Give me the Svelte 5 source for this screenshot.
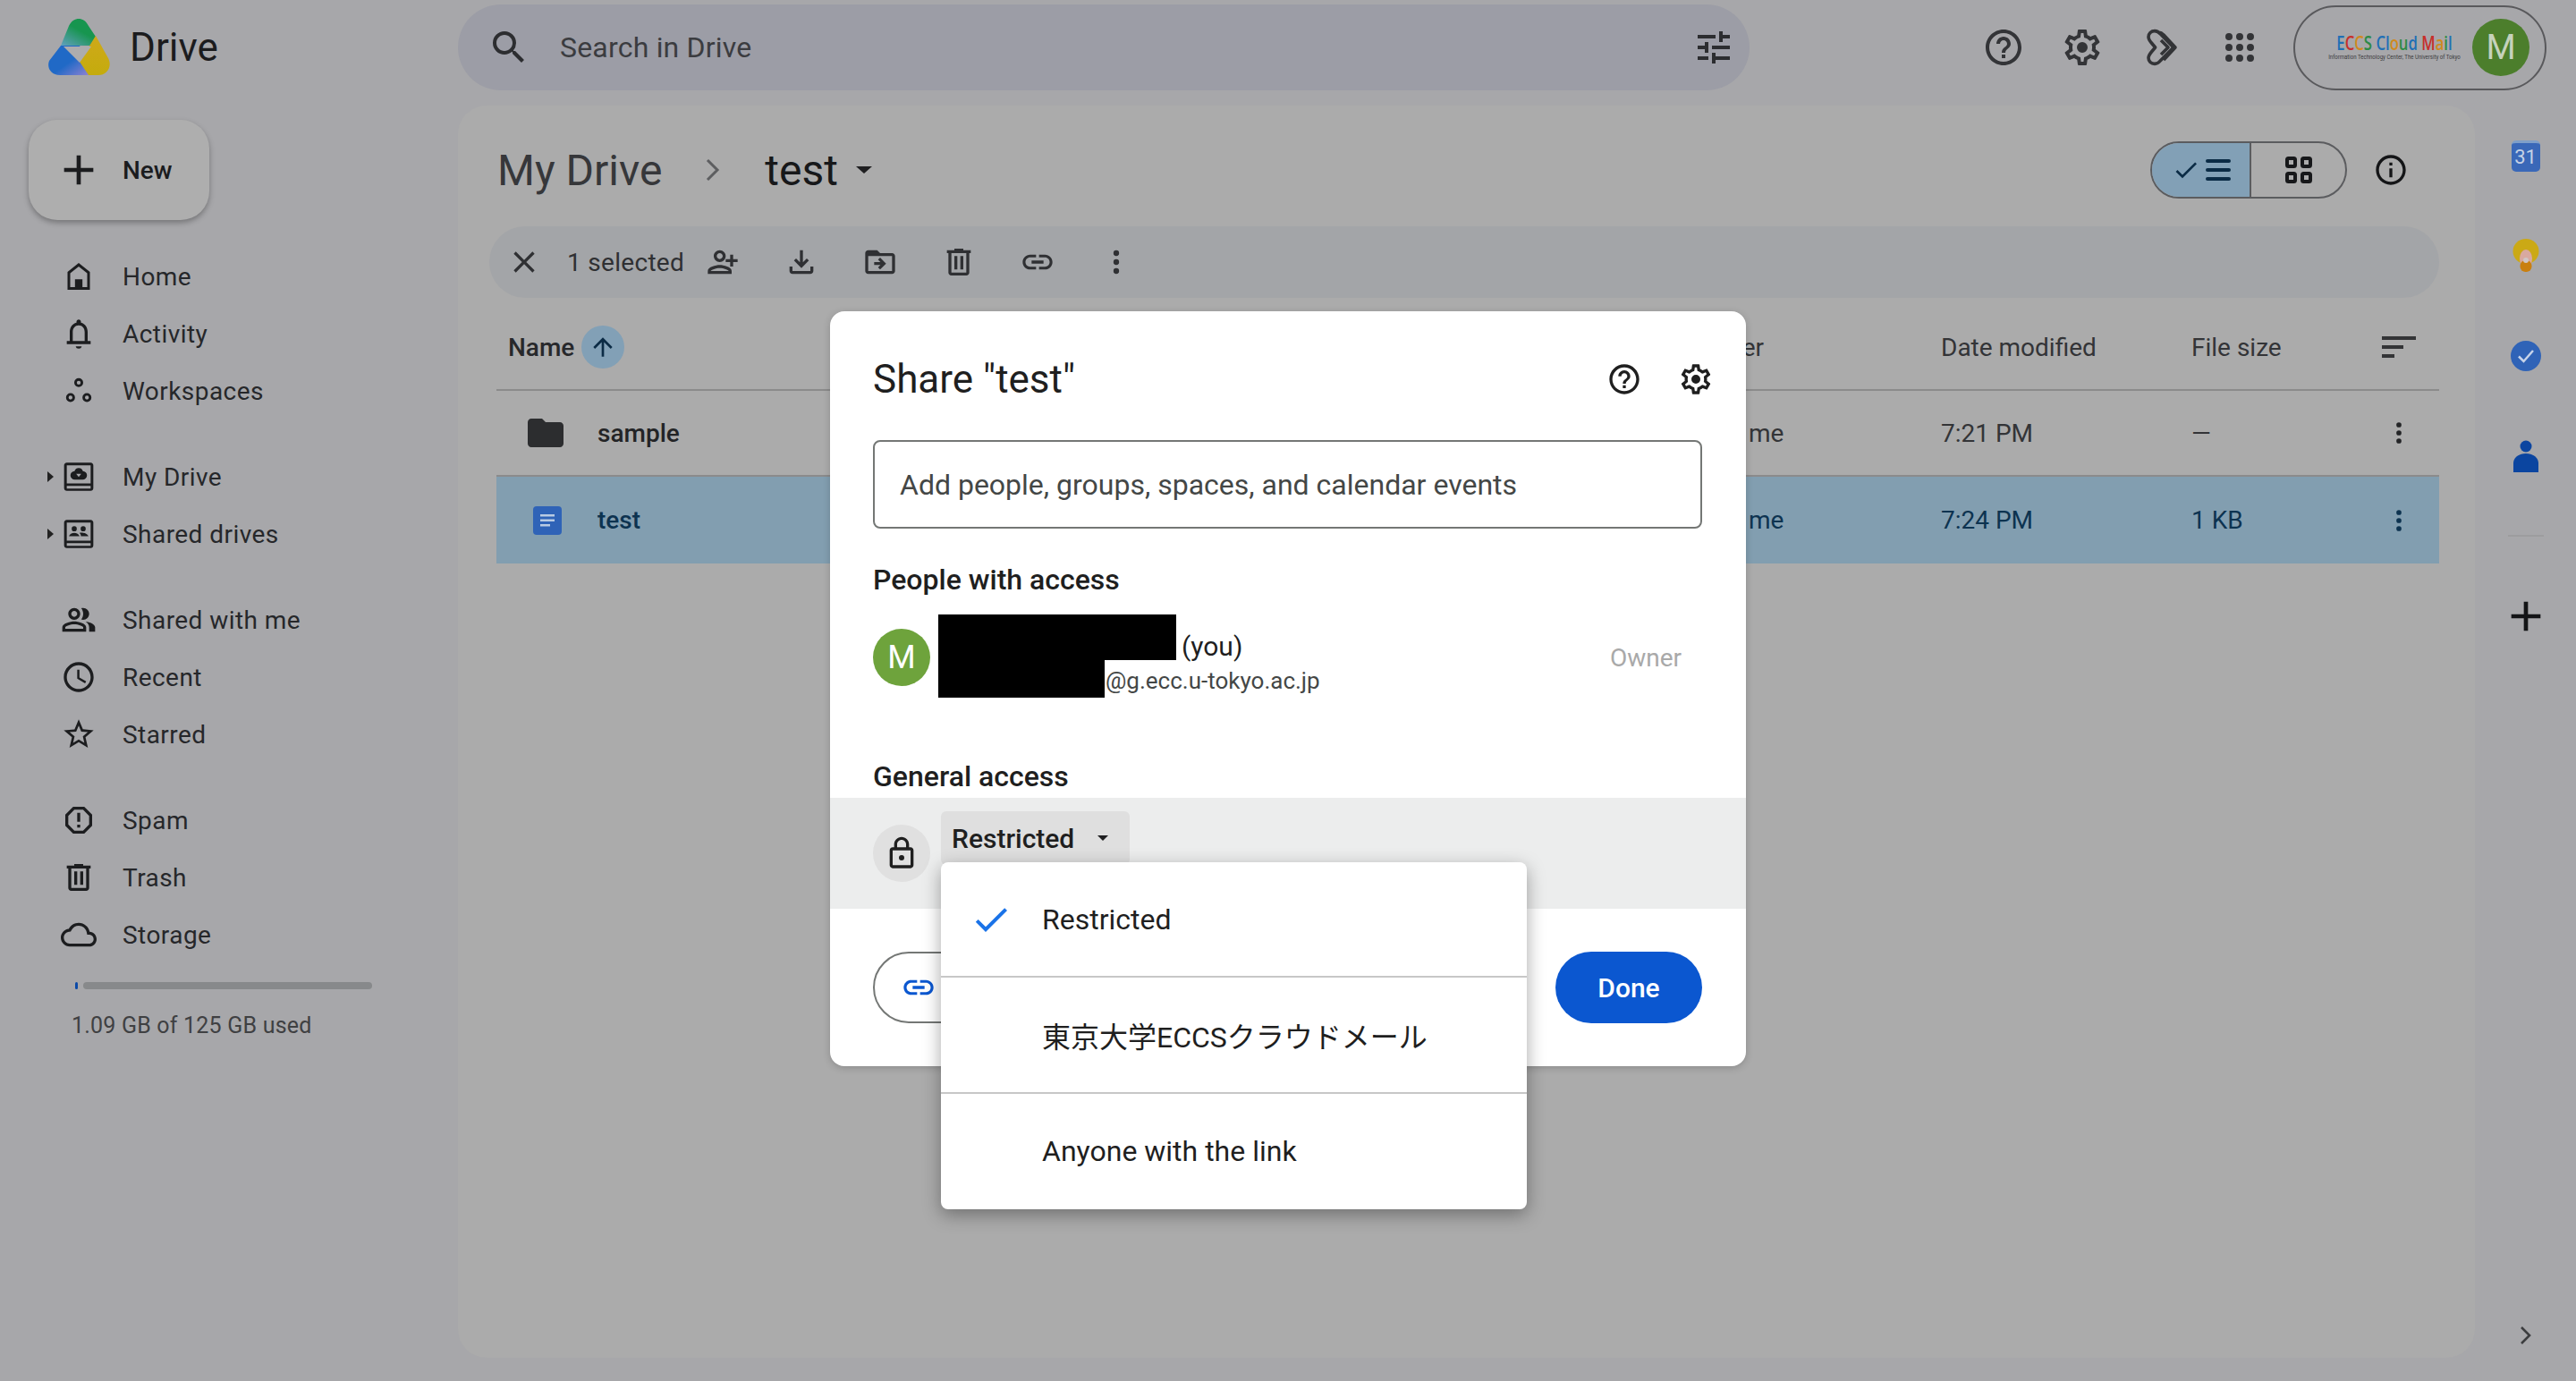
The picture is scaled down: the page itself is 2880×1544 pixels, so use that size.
<script>
  const circ = (x, y, r) => `M${x - r} ${y}a${r} ${r} 0 1 0 ${2 * r} 0a${r} ${r} 0 1 0 ${-2 * r} 0z`;
  const ring = (x, y, r, w) => circ(x, y, r) + circ(x, y, r - w);
  const P = {
    search: 'M15.5 14h-.79l-.28-.27A6.471 6.471 0 0 0 16 9.5 6.5 6.5 0 1 0 9.5 16c1.61 0 3.09-.59 4.23-1.57l.27.28v.79l5 4.99L20.49 19l-4.99-5zm-6 0C7.01 14 5 11.99 5 9.5S7.01 5 9.5 5 14 7.01 14 9.5 11.99 14 9.5 14z',
    tune: 'M3 17v2h6v-2H3zM3 5v2h10V5H3zm10 16v-2h8v-2h-8v-2h-2v6h2zM7 9v2H3v2h4v2h2V9H7zm14 4v-2H11v2h10zm-6-4h2V7h4V5h-4V3h-2v6z',
    help: 'M11 18h2v-2h-2v2zm1-16C6.48 2 2 6.48 2 12s4.48 10 10 10 10-4.48 10-10S17.52 2 12 2zm0 18c-4.41 0-8-3.59-8-8s3.59-8 8-8 8 3.59 8 8-3.59 8-8 8zm0-14c-2.21 0-4 1.79-4 4h2c0-1.1.9-2 2-2s2 .9 2 2c0 2-3 1.75-3 5h2c0-2.25 3-2.5 3-5 0-2.21-1.79-4-4-4z',
    gear: 'M19.43 12.98c.04-.32.07-.64.07-.98 0-.34-.03-.66-.07-.98l2.11-1.65c.19-.15.24-.42.12-.64l-2-3.46c-.09-.16-.26-.25-.44-.25-.06 0-.12.01-.17.03l-2.49 1c-.52-.4-1.08-.73-1.69-.98l-.38-2.65C14.46 2.18 14.25 2 14 2h-4c-.25 0-.46.18-.49.42l-.38 2.65c-.61.25-1.17.59-1.69.98l-2.49-1c-.06-.02-.12-.03-.18-.03-.17 0-.34.09-.43.25l-2 3.46c-.13.22-.07.49.12.64l2.11 1.65c-.04.32-.07.65-.07.98 0 .33.03.66.07.98l-2.11 1.65c-.19.15-.24.42-.12.64l2 3.46c.09.16.26.25.44.25.06 0 .12-.01.17-.03l2.49-1c.52.4 1.08.73 1.69.98l.38 2.65c.03.24.24.42.49.42h4c.25 0 .46-.18.49-.42l.38-2.65c.61-.25 1.17-.59 1.69-.98l2.49 1c.06.02.12.03.18.03.17 0 .34-.09.43-.25l2-3.46c.12-.22.07-.49-.12-.64l-2.11-1.65zm-1.98-1.71c.04.31.05.52.05.73 0 .21-.02.43-.05.73l-.14 1.13.89.7 1.08.84-.7 1.21-1.27-.51-1.04-.42-.9.68c-.43.32-.84.56-1.25.73l-1.06.43-.16 1.13-.2 1.35h-1.4l-.19-1.35-.16-1.13-1.06-.43c-.43-.18-.83-.41-1.23-.71l-.91-.7-1.06.43-1.27.51-.7-1.21 1.08-.84.89-.7-.14-1.13c-.03-.31-.05-.54-.05-.74s.02-.43.05-.73l.14-1.13-.89-.7-1.08-.84.7-1.21 1.27.51 1.04.42.9-.68c.43-.32.84-.56 1.25-.73l1.06-.43.16-1.13.2-1.35h1.39l.19 1.35.16 1.13 1.06.43c.43.18.83.41 1.23.71l.91.7 1.06-.43 1.27-.51.7 1.21-1.07.85-.89.7.14 1.13z' + circ(12, 12, 3),
    apps: [6, 12, 18].flatMap((y) => [6, 12, 18].map((x) => circ(x, y, 2))).join(''),
    plus: 'M19 13h-6v6h-2v-6H5v-2h6V5h2v6h6v2z',
    home: 'M12 3 4.5 9v12h15V9L12 3zm5.7 16.2H6.3V9.9L12 5.4l5.700 4.500v9.300zM9.500 14h5v5.200h-5z',
    bell: 'M12 22c1.1 0 1.800-.5 2-1.500h-4c.2 1 .9 1.500 2 1.500zm6-6.500V11c0-3.070-1.630-5.640-4.500-6.320V4c0-.83-.67-1.500-1.500-1.500s-1.500.67-1.500 1.500v.68C7.640 5.360 6 7.920 6 11v6H4v2h16v-2h-2v-1.500zM16 17H8v-6c0-2.480 1.510-4.500 4-4.500s4 2.020 4 4.500v6z',
    work: ring(12, 6.500, 3, 1.700) + ring(6.500, 16.500, 3, 1.700) + ring(17.500, 16.500, 3, 1.700),
    mydrive: 'M20 2.500H4c-1 0-1.800.8-1.800 1.800v15.400c0 1 .8 1.800 1.800 1.800h16c1 0 1.800-.8 1.800-1.800V4.300c0-1-.8-1.800-1.800-1.800zM20 20H4v-1.800h16V20zm0-3.500H4V4.300h16v12.200zM12 6.200a3 3 0 0 0-2.800 2A2.600 2.600 0 0 0 9.500 14h5a2.600 2.600 0 0 0 .3-5.800A3 3 0 0 0 12 6.200zM10.300 10h3.400L12 12.200z',
    shdrive: 'M20 2.500H4c-1 0-1.800.8-1.800 1.800v15.400c0 1 .8 1.800 1.800 1.800h16c1 0 1.800-.8 1.800-1.800V4.300c0-1-.8-1.800-1.800-1.800zM20 20H4v-1.800h16V20zm0-3.500H4V4.300h16v12.200z' + circ(9, 8.500, 1.700) + circ(15, 8.500, 1.700) + 'M5.500 13.500c.3-1.500 2-2.300 3.500-2.300s3.200.8 3.500 2.300zM13.500 13.500c0-1-.5-1.700-1-2.200.8-.2 1.700-.2 2.500-.1 1.600.1 3 1 3.500 2.300z',
    people: 'M16.670 13.130C18.040 14.060 19 15.320 19 17v3h4v-3c0-2.180-3.570-3.470-6.330-3.870zM15 12c2.210 0 4-1.790 4-4s-1.790-4-4-4c-.47 0-.91.1-1.330.24C14.500 5.270 15 6.580 15 8s-.5 2.730-1.330 3.760c.42.14.86.24 1.330.24zM9 12c2.210 0 4-1.790 4-4s-1.790-4-4-4-4 1.790-4 4 1.790 4 4 4zm0-6c1.100 0 2 .9 2 2s-.9 2-2 2-2-.9-2-2 .9-2 2-2zM9 13c-2.670 0-8 1.340-8 4v3h16v-3c0-2.660-5.330-4-8-4zm6 5H3v-.99C3.200 16.290 6.300 15 9 15s5.800 1.290 6 2v1z',
    clock: 'M11.990 2C6.470 2 2 6.480 2 12s4.470 10 9.990 10C17.520 22 22 17.520 22 12S17.520 2 11.990 2zM12 20c-4.420 0-8-3.580-8-8s3.580-8 8-8 8 3.580 8 8-3.580 8-8 8zm.5-13H11v6l5.250 3.150.75-1.230-4.500-2.670z',
    star: 'M22 9.240l-7.190-.62L12 2 9.190 8.630 2 9.240l5.460 4.730L5.820 21 12 17.270 18.180 21l-1.630-7.030L22 9.240zM12 15.400l-3.760 2.270 1-4.280-3.320-2.880 4.380-.38L12 6.100l1.710 4.040 4.380.38-3.320 2.880 1 4.280L12 15.400z',
    spam: 'M15.730 3H8.270L3 8.270v7.460L8.270 21h7.460L21 15.730V8.270L15.730 3zM19 14.900L14.900 19H9.100L5 14.900V9.100L9.100 5h5.800L19 9.100v5.800zM11 7h2v6h-2zM11 15h2v2h-2z',
    trash: 'M15 4V3H9v1H4v2h1v13c0 1.100.9 2 2 2h10c1.100 0 2-.9 2-2V6h1V4h-5zm2 15H7V6h10v13zM9 8h2v9H9zm4 0h2v9h-2z',
    cloud: 'M19.350 10.040C18.670 6.590 15.640 4 12 4 9.110 4 6.600 5.640 5.350 8.040 2.340 8.360 0 10.910 0 14c0 3.310 2.690 6 6 6h13c2.760 0 5-2.240 5-5 0-2.640-2.050-4.780-4.650-4.960zM19 18H6c-2.210 0-4-1.790-4-4 0-2.050 1.530-3.760 3.560-3.970l1.070-.11.5-.95C8.080 7.140 9.940 6 12 6c2.620 0 4.880 1.860 5.390 4.430l.3 1.500 1.530.11c1.560.1 2.780 1.410 2.780 2.960 0 1.650-1.350 3-3 3z',
    close: 'M19 6.410L17.590 5 12 10.590 6.410 5 5 6.410 10.590 12 5 17.590 6.410 19 12 13.410 17.590 19 19 17.590 13.410 12z',
    addp: 'M10 12c2.210 0 4-1.790 4-4s-1.790-4-4-4-4 1.790-4 4 1.790 4 4 4zm0-6c1.100 0 2 .9 2 2s-.9 2-2 2-2-.9-2-2 .9-2 2-2zm0 8c-2.670 0-8 1.340-8 4v2h16v-2c0-2.660-5.330-4-8-4zm-6 4c.22-.72 3.310-2 6-2 2.700 0 5.800 1.290 6 2H4zM19 10V7h-2v3h-3v2h3v3h2v-3h3v-2z',
    down: 'M18 15v3H6v-3H4v3c0 1.100.9 2 2 2h12c1.100 0 2-.9 2-2v-3h-2zm-1-4l-1.410-1.410L13 12.170V4h-2v8.170L8.410 9.590 7 11l5 5 5-5z',
    move: 'M20 6h-8l-2-2H4c-1.100 0-1.990.9-1.990 2L2 18c0 1.100.9 2 2 2h16c1.100 0 2-.9 2-2V8c0-1.100-.9-2-2-2zm0 12H4V8h16v10zm-8-1l4-4-4-4-1.400 1.400L12.200 12H8v2h4.200l-1.600 1.600z',
    link: 'M3.900 12c0-1.710 1.390-3.100 3.100-3.100h4V7H7c-2.760 0-5 2.240-5 5s2.240 5 5 5h4v-1.900H7c-1.710 0-3.100-1.390-3.100-3.100zM8 13h8v-2H8v2zm9-6h-4v1.900h4c1.710 0 3.100 1.390 3.100 3.100s-1.390 3.100-3.100 3.100h-4V17h4c2.760 0 5-2.240 5-5s-2.240-5-5-5z',
    more: circ(12, 6, 1.900) + circ(12, 12, 1.900) + circ(12, 18, 1.900),
    info: 'M11 7h2v2h-2zm0 4h2v6h-2zm1-9C6.480 2 2 6.480 2 12s4.480 10 10 10 10-4.480 10-10S17.520 2 12 2zm0 18c-4.410 0-8-3.590-8-8s3.590-8 8-8 8 3.590 8 8-3.590 8-8 8z',
    folder: 'M10 4H4c-1.100 0-1.990.9-1.990 2L2 18c0 1.100.9 2 2 2h16c1.100 0 2-.9 2-2V8c0-1.100-.9-2-2-2h-8l-2-2z',
    lock: 'M18 8h-1V6c0-2.760-2.240-5-5-5S7 3.240 7 6v2H6c-1.100 0-2 .9-2 2v10c0 1.100.9 2 2 2h12c1.100 0 2-.9 2-2V10c0-1.100-.9-2-2-2zM9 6c0-1.660 1.340-3 3-3s3 1.340 3 3v2H9V6zm9 14H6V10h12v10z' + circ(12, 15, 1.800),
    check: 'M9 16.170L4.830 12l-1.420 1.410L9 19 21 7l-1.410-1.410z',
    arrowup: 'M4 12l1.410 1.410L11 7.830V20h2V7.830l5.580 5.590L20 12l-8-8-8 8z'
  };
  const groups = [
    [['home', 'Home'], ['bell', 'Activity'], ['work', 'Workspaces']],
    [['mydrive', 'My Drive', true], ['shdrive', 'Shared drives', true]],
    [['people', 'Shared with me'], ['clock', 'Recent'], ['star', 'Starred']],
    [['spam', 'Spam'], ['trash', 'Trash'], ['cloud', 'Storage']]
  ];
  const tools = ['addp', 'down', 'move', 'trash', 'link', 'more'];
  const eccs = [['E', '#1f6fb5'], ['C', '#c62f2b'], ['C', '#d08a1d'], ['S', '#2d8a45'], [' ', '#000'], ['C', '#1f6fb5'], ['l', '#1f6fb5'], ['o', '#d08a1d'], ['u', '#2d8a45'], ['d', '#1f6fb5'], [' ', '#000'], ['M', '#c62f2b'], ['a', '#d08a1d'], ['i', '#2d8a45'], ['l', '#1f6fb5']];
</script>

{#snippet ic(name, size, cls = '')}
  <svg class="ic {cls}" width={size} height={size} viewBox="0 0 24 24" fill="currentColor" fill-rule="evenodd"><path d={P[name]} /></svg>
{/snippet}

<div class="app">
  <header class="top">
    <div class="brand">
      <svg width="70" height="66" viewBox="0 0 70 66">
        <defs>
          <linearGradient id="gg" x1="0.05" y1="1" x2="0.5" y2="0.4"><stop offset="0" stop-color="#5f9fbb" /><stop offset="1" stop-color="#17954f" /></linearGradient>
          <linearGradient id="bg" x1="0.5" y1="0.5" x2="0.95" y2="0.9"><stop offset="0" stop-color="#2069c6" /><stop offset="1" stop-color="#8d82d2" /></linearGradient>
          <linearGradient id="yg" x1="0" y1="0" x2="0" y2="1"><stop offset="0" stop-color="#cfa91a" /><stop offset="1" stop-color="#c4ab0d" /></linearGradient>
        </defs>
        <path d="M15 31 24 9C27 3 31 1 35 1s8 2 11 8l8 12-6 10z" fill="url(#gg)" />
        <path d="M15 31H36L45 49 53 64H14C4 64-1 56 2 48z" transform="translate(0 0)" fill="url(#bg)" />
        <path d="M54 20 68 45C73 55 66 64 57 64H46L36 49z" fill="url(#yg)" />
        <path d="M18 32H49L36 50z" fill="#acacae" />
      </svg>
      <span class="brand-name">Drive</span>
    </div>
    <div class="search">
      {@render ic('search', 48)}
      <span class="search-text">Search in Drive</span>
      {@render ic('tune', 48, 'tune')}
    </div>
    <div class="top-icons">
      {@render ic('help', 48)}
      {@render ic('gear', 48)}
      <svg class="ic" width="48" height="48" viewBox="0 0 24 24" fill="none" stroke="currentColor" stroke-width="1.800" stroke-linejoin="round"><path d="M8.500 2.800c-2 0-3.500 1.500-3.500 3.300 0 1.300.8 2.300 1.700 3.400L8.800 12 6.700 14.500C5.800 15.600 5 16.600 5 17.900c0 1.800 1.500 3.300 3.500 3.300 1.300 0 2.300-.7 3.100-1.700l7.400-7.500-7.400-7.600C10.800 3.400 9.800 2.800 8.500 2.800zM11 3.600c1 0 1.800.7 2.500 1.400L20 12l-6.500 7M12 8l4 4-4 4" /></svg>
      {@render ic('apps', 48)}
    </div>
    <div class="account">
      <div class="eccs">
        <div class="eccs-name">{#each eccs as [c, col]}<span style="color:{col}">{c}</span>{/each}</div>
        <div class="eccs-sub">Information Technology Center, The University of Tokyo</div>
      </div>
      <div class="avatar-top">M</div>
    </div>
  </header>

  <div class="body">
    <aside class="side">
      <button class="new">{@render ic('plus', 56)}<span>New</span></button>
      <nav class="nav">
        {#each groups as g}
          <ul class="group">
            {#each g as [icon, label, tri]}
              <li class="item">
                {#if tri}<i class="tri"></i>{/if}
                <span class="item-ic">{@render ic(icon, 40)}</span>
                <span>{label}</span>
              </li>
            {/each}
          </ul>
        {/each}
      </nav>
      <div class="bar"><i class="bar-used"></i><i class="bar-rest"></i></div>
      <div class="used">1.09 GB of 125 GB used</div>
    </aside>

    <main class="panel">
      <div class="crumbs">
        <span class="crumb">My Drive</span>
        <svg class="chev" width="18" height="28" viewBox="0 0 18 28" fill="none" stroke="#5d5e60" stroke-width="3"><path d="M3 3l11 11L3 25" /></svg>
        <span class="crumb cur">test</span>
        <i class="caret big"></i>
        <div class="view">
          <div class="v-left">
            {@render ic('check', 32)}
            <svg width="28" height="24" viewBox="0 0 28 24" fill="#0b2b45"><rect y="0" width="28" height="4" rx="2" /><rect y="10" width="28" height="4" rx="2" /><rect y="20" width="28" height="4" rx="2" /></svg>
          </div>
          <div class="v-right">
            <svg width="30" height="30" viewBox="0 0 30 30" fill="none" stroke="#17181a" stroke-width="4"><rect x="2" y="2" width="9" height="9" rx="1.500" /><rect x="19" y="2" width="9" height="9" rx="1.500" /><rect x="2" y="19" width="9" height="9" rx="1.500" /><rect x="19" y="19" width="9" height="9" rx="1.500" /></svg>
          </div>
        </div>
        <span class="info">{@render ic('info', 40)}</span>
      </div>

      <div class="toolbar">
        <span class="t-close">{@render ic('close', 40)}</span>
        <span class="t-count">1 selected</span>
        <div class="t-icons">
          {#each tools as t}<span class="t-ic">{@render ic(t, 40)}</span>{/each}
        </div>
      </div>

      <div class="row head">
        <div class="c-name">Name <span class="sort-up">{@render ic('arrowup', 32)}</span></div>
        <div class="c-owner">Owner</div>
        <div class="c-date">Date modified</div>
        <div class="c-size">File size</div>
        <div class="c-act">
          <svg width="38" height="24" viewBox="0 0 38 24" fill="#333436"><rect width="38" height="4" /><rect y="10" width="24" height="4" /><rect y="20" width="14" height="4" /></svg>
        </div>
      </div>
      <div class="row file">
        <div class="c-name"><span class="f-ic">{@render ic('folder', 48)}</span><b>sample</b></div>
        <div class="c-owner me">me</div>
        <div class="c-date">7:21 PM</div>
        <div class="c-size">—</div>
        <div class="c-act">{@render ic('more', 36)}</div>
      </div>
      <div class="row file sel">
        <div class="c-name">
          <span class="f-ic">
            <svg width="32" height="32" viewBox="0 0 32 32"><rect width="32" height="32" rx="4" fill="#2f63b7" /><path d="M8 9h16v2.500H8zM8 14.500h16V17H8zM8 20h11v2.500H8z" fill="#b9cbe3" /></svg>
          </span><b>test</b>
        </div>
        <div class="c-owner me">me</div>
        <div class="c-date">7:24 PM</div>
        <div class="c-size">1 KB</div>
        <div class="c-act">{@render ic('more', 36)}</div>
      </div>
    </main>

    <aside class="rail">
      <div class="slot">
        <div class="cal">31</div>
      </div>
      <div class="slot">
        <svg width="30" height="38" viewBox="0 0 30 38"><ellipse cx="15" cy="14" rx="14.500" ry="14" fill="#cba915" /><ellipse cx="15" cy="22" rx="7" ry="10" fill="#d9a9a0" /><rect x="8.500" y="24" width="13" height="13" rx="6" fill="#c97f10" /><circle cx="15" cy="24" r="3" fill="#cfc6c6" /></svg>
      </div>
      <div class="slot">
        <svg width="36" height="36" viewBox="0 0 36 36"><circle cx="18" cy="18" r="17" fill="#2f63b7" /><path d="M10 18.500l5.500 5.500L26 12" fill="none" stroke="#c7d4ea" stroke-width="2.500" /></svg>
      </div>
      <div class="slot">
        <svg width="30" height="36" viewBox="0 0 30 36"><circle cx="15" cy="7" r="6.500" fill="#0b45a0" /><path d="M1 36V26C1 19 8 15 15 15s14 4 14 11v10z" fill="#0b45a0" /></svg>
      </div>
      <div class="rail-sep"></div>
      <div class="slot plus">{@render ic('plus', 56)}</div>
      <svg class="rail-chev" width="14" height="22" viewBox="0 0 14 22" fill="none" stroke="#3c3d3f" stroke-width="2.600"><path d="M2 2l9 9-9 9" /></svg>
    </aside>
  </div>

  <section class="dialog">
    <div class="d-title">
      <h2>Share "test"</h2>
      <div class="d-title-ic">
        {@render ic('help', 40)}
        {@render ic('gear', 40)}
      </div>
    </div>
    <div class="d-input">Add people, groups, spaces, and calendar events</div>
    <h3 class="d-h people-h">People with access</h3>
    <div class="person">
      <div class="avatar">M</div>
      <div class="who">
        <div class="who-l"><i class="black b1"></i><span class="you">(you)</span></div>
        <div class="who-l"><i class="black b2"></i><span class="mail">@g.ecc.u-tokyo.ac.jp</span></div>
      </div>
      <span class="owner">Owner</span>
    </div>
    <h3 class="d-h general-h">General access</h3>
    <div class="band">
      <span class="lock">{@render ic('lock', 40)}</span>
      <div class="restrict"><span>Restricted</span><i class="caret"></i></div>
    </div>
    <div class="d-foot">
      <button class="copy">{@render ic('link', 40)}<span>Copy link</span></button>
      <button class="done">Done</button>
    </div>
    <div class="menu">
      <div class="m-item"><span class="m-ic">{@render ic('check', 48)}</span>Restricted</div>
      <div class="m-item"><span class="m-ic"></span>東京大学ECCSクラウドメール</div>
      <div class="m-item"><span class="m-ic"></span>Anyone with the link</div>
    </div>
  </section>
</div>

<style>
  :global(body) { margin: 0; background: #a7a7aa; }
  .app { position: relative; width: 2880px; height: 1544px; overflow: hidden; background: #a7a7aa; color: #1d1e20; font-family: Roboto, "Noto Sans CJK JP", sans-serif; font-size: 28px; }
  .ic { display: block; flex: none; }
  h2, h3, ul { margin: 0; padding: 0; }
  button { font: inherit; border: 0; padding: 0; }
  i { display: block; }

  .top { display: flex; align-items: center; height: 118px; padding-bottom: 12px; box-sizing: border-box; }
  .brand { width: 512px; padding-left: 53px; box-sizing: border-box; display: flex; align-items: center; gap: 22px; }
  .brand-name { font-size: 44px; color: #1c1c1e; }
  .search { width: 1444px; height: 96px; border-radius: 48px; background: #9c9da6; display: flex; align-items: center; padding: 0 16px 0 33px; box-sizing: border-box; color: #2c2d30; }
  .search-text { margin-left: 33px; font-size: 32px; color: #3b3c40; flex: 1; letter-spacing: .2px; }
  .top-icons { display: flex; gap: 40px; margin-left: 260px; color: #333437; }
  .account { margin-left: 36px; width: 283px; height: 95px; box-sizing: border-box; border: 2px solid #59595c; border-radius: 48px; display: flex; align-items: center; padding-left: 44px; }
  .eccs { width: 134px; text-align: center; }
  .eccs-name { font-family: "Open Sans", sans-serif; font-weight: 600; font-size: 22px; line-height: 20px; white-space: pre; transform: scaleX(.76); margin: 0 -30px; }
  .eccs-sub { font-size: 6.500px; line-height: 10px; white-space: nowrap; color: #3b3b3d; margin: 2px -20px 0; transform: scaleX(.93); }
  .avatar-top { width: 64px; height: 64px; margin-left: 20px; border-radius: 50%; background: #4c7e2c; color: #c5d2bc; font-size: 38px; display: flex; align-items: center; justify-content: center; }

  .body { display: flex; height: 1426px; }
  .side { width: 512px; flex: none; }
  .new { display: flex; align-items: center; margin: 16px 0 0 32px; width: 202px; height: 112px; border-radius: 32px; background: #aeaeae; box-shadow: 0 3px 6px rgba(0,0,0,.3); color: #1b1c1e; padding-left: 28px; box-sizing: border-box; }
  .new span { margin-left: 21px; font-weight: 500; font-size: 28px; }
  .nav { margin-top: 31px; display: flex; flex-direction: column; gap: 32px; }
  .group { list-style: none; }
  .item { position: relative; display: flex; align-items: center; height: 64px; padding-left: 68px; letter-spacing: .45px; color: #26272a; }
  .item-ic { width: 69px; flex: none; color: #1c1d1f; }
  .tri { position: absolute; left: 53px; top: 26px; border-left: 7px solid #222; border-top: 6px solid transparent; border-bottom: 6px solid transparent; }
  .bar { display: flex; gap: 6px; margin: 21px 0 0 84px; width: 332px; height: 8px; }
  .bar-used { width: 3px; background: #0b4aa8; border-radius: 2px; }
  .bar-rest { flex: 1; background: #87898b; border-radius: 4px; }
  .used { margin: 26px 0 0 80px; font-size: 25px; color: #3f4042; letter-spacing: .2px; }

  .panel { width: 2255px; height: 1400px; flex: none; background: #ababab; border-radius: 32px; padding: 36px 40px 0 35px; box-sizing: border-box; }
  .crumbs { display: flex; align-items: center; height: 72px; padding-left: 9px; }
  .crumb { font-size: 48px; color: #36373a; }
  .crumb.cur { color: #17181a; margin-left: 49px; }
  .chev { margin-left: 48px; }
  .caret { border-top: 6px solid #1f1f21; border-left: 6px solid transparent; border-right: 6px solid transparent; width: 0; }
  .caret.big { border-top-width: 8px; border-left-width: 9px; border-right-width: 9px; margin-left: 20px; }
  .view { margin-left: auto; display: flex; width: 220px; height: 64px; box-sizing: border-box; border: 2px solid #5b5c5f; border-radius: 32px; overflow: hidden; }
  .v-left { width: 109px; background: #82a0b6; border-right: 2px solid #5b5c5f; display: flex; align-items: center; justify-content: center; gap: 6px; color: #0b2b45; }
  .v-right { flex: 1; display: flex; align-items: center; justify-content: center; }
  .info { margin: 0 34px 0 29px; color: #141517; }

  .toolbar { display: flex; align-items: center; height: 80px; margin-top: 27px; border-radius: 40px; background: #a3a5a8; color: #2f3033; }
  .t-close { margin-left: 19px; }
  .t-count { margin-left: 28px; width: 154px; letter-spacing: .3px; }
  .t-icons { display: flex; gap: 48px; margin-left: 0; }
  .t-ic { display: block; }

  .row { display: grid; grid-template-columns: 1337px 278px 280px 213px 1fr; align-items: center; height: 96px; margin-left: 8px; box-sizing: border-box; border-bottom: 2px solid #8b8b8b; color: #333437; }
  .head { margin-top: 8px; }
  .c-name { display: flex; align-items: center; padding-left: 13px; color: #27282b; font-weight: 500; }
  .sort-up { width: 48px; height: 48px; margin-left: 8px; border-radius: 50%; background: #82a0b6; color: #0b2b45; display: flex; align-items: center; justify-content: center; }
  .c-act { display: flex; justify-content: center; width: 38px; padding-left: 0; }
  .file .c-act { color: #232426; }
  .c-owner.me { padding-left: 63px; }
  .file b { font-weight: 500; font-size: 28px; color: #232426; }
  .f-ic { width: 100px; margin-left: 0; padding-left: 18px; box-sizing: border-box; margin-right: 0; flex: none; display: flex; align-items: center; color: #2c2d2f; }
  .f-ic :global(svg) { margin-left: 0; }
  .file .c-name { padding-left: 13px; }
  .file .f-ic { width: 100px; }
  .sel { background: #829eb0; border-bottom: 0; height: 97px; color: #0d3350; }
  .sel b, .sel .c-act { color: #0d3350; }
  .sel .f-ic { padding-left: 28px; }

  .rail { flex: 1; display: flex; flex-direction: column; align-items: center; height: 1400px; }
  .slot { flex: none; height: 112px; display: flex; align-items: center; justify-content: center; }
  .cal { width: 32px; height: 35px; border-radius: 5px; background: #3a68b8; border-top: 3px solid #7f9fc9; box-sizing: border-box; color: #c6d2e6; font-size: 22px; display: flex; align-items: center; justify-content: center; }
  .rail-sep { width: 40px; height: 2px; background: #9d9d9f; margin: 32px 0 0; flex: none; }
  .slot.plus { margin-top: 33px; color: #131416; }
  .rail-chev { margin-top: auto; margin-bottom: 14px; }

  .dialog { position: absolute; left: 928px; top: 348px; width: 1024px; height: 844px; box-sizing: border-box; padding: 44px 49px 0 48px; background: #fff; border-radius: 16px; box-shadow: 0 2px 8px rgba(0,0,0,.18); color: #1f1f1f; }
  .d-title { display: flex; align-items: center; justify-content: space-between; height: 64px; }
  .d-title h2 { font-size: 44px; font-weight: 400; }
  .d-title-ic { display: flex; gap: 40px; margin-right: -13px; }
  .d-input { margin-top: 36px; height: 99px; box-sizing: border-box; border: 2px solid #747775; border-radius: 8px; display: flex; align-items: center; padding-left: 28px; font-size: 32px; color: #444746; }
  .d-h { font-size: 32px; font-weight: 500; line-height: 40px; }
  .people-h { margin-top: 37px; }
  .person { display: flex; align-items: center; height: 94px; margin-top: 20px; }
  .avatar { width: 64px; height: 64px; flex: none; border-radius: 50%; background: #6ea33c; color: #fff; font-size: 36px; display: flex; align-items: center; justify-content: center; }
  .who { margin-left: 9px; }
  .who-l { display: flex; }
  .black { background: #000; flex: none; }
  .b1 { width: 266px; height: 51px; }
  .b2 { width: 186px; height: 42px; }
  .you { margin: 16px 0 0 6px; font-size: 30px; line-height: 40px; height: 35px; }
  .mail { margin: 0 0 0 1px; font-size: 26px; line-height: 46px; color: #444746; }
  .owner { margin-left: auto; margin-right: 23px; color: #a9a9a9; font-size: 28px; }
  .general-h { margin-top: 66px; }
  .band { display: flex; align-items: flex-start; gap: 12px; height: 124px; margin: 4px -49px 0 -48px; padding: 15px 0 0 48px; box-sizing: border-box; background: #eceded; }
  .lock { width: 64px; height: 64px; margin-top: 15px; border-radius: 50%; background: #e0e0e0; display: flex; align-items: center; justify-content: center; }
  .restrict { width: 211px; height: 60px; box-sizing: border-box; padding-left: 12px; border-radius: 6px; background: #dfdfdf; display: flex; align-items: center; font-weight: 500; font-size: 30px; }
  .restrict span { flex: none; }
  .restrict .caret { margin-left: 26px; }
  .d-foot { display: flex; justify-content: space-between; margin-top: 48px; }
  .copy { display: flex; align-items: center; width: 300px; height: 80px; box-sizing: border-box; border: 2px solid #747775; border-radius: 40px; background: #fff; color: #0b57d0; padding-left: 29px; font-weight: 500; }
  .copy span { margin-left: 16px; }
  .done { width: 164px; height: 80px; border-radius: 40px; background: #0b57d0; color: #fff; font-weight: 500; font-size: 30px; }
  .menu { position: absolute; left: 124px; top: 616px; width: 655px; height: 388px; display: grid; grid-template-rows: 1fr 1fr 1fr; background: #fff; border-radius: 8px; box-shadow: 0 6px 20px rgba(0,0,0,.35); font-size: 32px; }
  .m-item { display: flex; align-items: center; border-bottom: 2px solid #c7c7c7; color: #1f1f1f; }
  .m-item:last-child { border-bottom: 0; }
  .m-ic { width: 113px; padding-left: 32px; box-sizing: border-box; flex: none; color: #1a73e8; }
</style>
